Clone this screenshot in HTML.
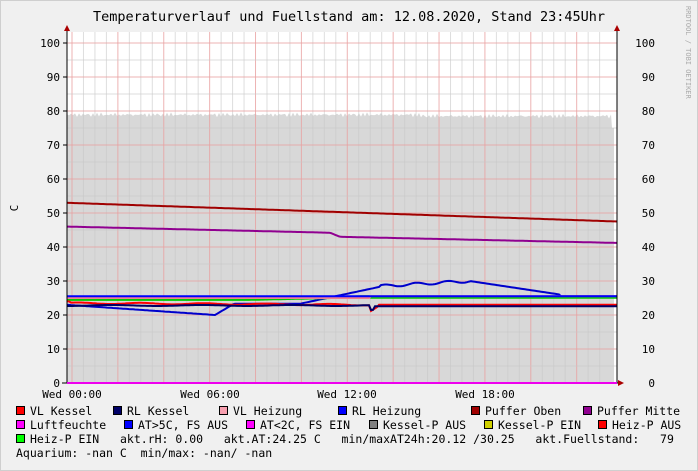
<!DOCTYPE html>
<html><head><meta charset="utf-8"><style>
html,body{margin:0;padding:0;background:#f0f0f0}
svg{display:block}
text{font-family:"DejaVu Sans Mono","Liberation Mono",monospace;font-size:11px;fill:#000;white-space:pre}
.lg{font-size:11.5px}
</style></head><body>
<svg id="s" width="698" height="471" xmlns="http://www.w3.org/2000/svg" xml:space="preserve">
<rect x="0" y="0" width="698" height="471" fill="#f0f0f0"/>
<rect x="0.5" y="0.5" width="697" height="470" fill="none" stroke="#cfcfcf"/>
<rect x="67" y="32" width="550" height="351" fill="#fff"/>
<g id="area"></g>
<g id="grid"></g>
<g id="lines" fill="none" stroke-width="2"></g>
<text x="349" y="21" text-anchor="middle" style="font-size:13.5px">Temperaturverlauf und Fuellstand am: 12.08.2020, Stand 23:45Uhr</text>
<text x="18" y="208" transform="rotate(-90 18 208)" text-anchor="middle">C</text>
<text x="686" y="6" transform="rotate(90 686 6)" style="font-size:7px;fill:#aaa">RRDTOOL / TOBI OETIKER</text>
<g id="lab"></g>
<line x1="67" y1="383" x2="67" y2="30" stroke="#000"/>
<line x1="617" y1="383" x2="617" y2="30" stroke="#000"/>
<line x1="62" y1="383" x2="622" y2="383" stroke="#000"/>
<polygon points="64,31 70,31 67,25" fill="#a00"/>
<polygon points="614,31 620,31 617,25" fill="#a00"/>
<polygon points="618,380 618,386 624,383" fill="#a00"/>
<line x1="67" y1="383" x2="617" y2="383" stroke="#e0e" stroke-width="2"/>
<text x="72" y="398" text-anchor="middle">Wed 00:00</text>
<text x="210" y="398" text-anchor="middle">Wed 06:00</text>
<text x="347" y="398" text-anchor="middle">Wed 12:00</text>
<text x="485" y="398" text-anchor="middle">Wed 18:00</text>
<g id="leg"></g>
<text class="lg" x="120" y="443">akt.rH: 0.00   akt.AT:24.25 C   min/maxAT24h:20.12 /30.25   akt.Fuellstand:   79</text>
<text class="lg" x="16" y="457">Aquarium: -nan C  min/max: -nan/ -nan</text>
</svg>
<script>
const NS="http://www.w3.org/2000/svg",Y=v=>383-v*3.4;
function el(p,t,a,tx){const e=document.createElementNS(NS,t);for(const k in a)e.setAttribute(k,a[k]);if(tx!==undefined)e.textContent=tx;document.getElementById(p).appendChild(e);return e;}
let pts="67,383 ";for(let x=67;x<=612;x+=2){let v=79+Math.sin(x*1.7)*0.4+((x*37)%7)/10-0.4;if(x>420)v-=0.4;pts+=x+","+Y(v).toFixed(1)+" ";}
pts+="612,"+Y(75)+" 614,"+Y(75)+" 614,383";el("area","polygon",{points:pts,fill:"#d8d8d8"});
for(let i=0;i<48;i++){let x=72+i*11.47-11.47;if(x<67||x>617)continue;let maj=((i-1)%4===0);el("grid","line",{x1:x,y1:32,x2:x,y2:383,stroke:maj?"#e8a0a0":"#c8c8c8","stroke-width":1,"stroke-opacity":maj?0.8:0.6});}
for(let v=5;v<=100;v+=5){let maj=v%10==0;el("grid","line",{x1:67,y1:Y(v),x2:617,y2:Y(v),stroke:maj?"#e8a0a0":"#c8c8c8","stroke-opacity":maj?0.8:0.6});}
for(let v=0;v<=100;v+=10){el("lab","text",{x:60,y:Y(v)+4,"text-anchor":"end"},String(v));el("lab","text",{x:655,y:Y(v)+4,"text-anchor":"end"},String(v));el("lab","line",{x1:63,y1:Y(v),x2:67,y2:Y(v),stroke:"#000"});}
function path(c,f,w){let d="";for(let x=67;x<=617;x+=2){d+=(x==67?"M":"L")+x+","+Y(f(x)).toFixed(1);}el("lines","path",{d:d,stroke:c,"stroke-width":w||2});}
path("#00c",x=>x<215?23-(x-67)/148*3:x<235?20+(x-215)/20*3.5:x<300?23.3:x<380?23.3+(x-300)/80*5:x<470?28.5+(x-380)/90*1.5+Math.sin(x*0.2)*0.4:x<560?30-(x-470)/90*4:25.5);
path("#0c0",x=>x<250?24.6:x<370?24.6+(x-250)/120*0.8:25.2,3);
path("#f08090",x=>x<370?25:25.5);
path("#00f",x=>25.5);
path("#f00",x=>x<70?24:x<370?23.5-(x-67)/300*0.5+Math.sin(x*0.1)*0.2:x<378?21+(x-370)/8*1.5:23);
path("#006",x=>x<370?22.8+Math.sin(x*0.07)*0.15:x<375?21.5:22.6);
path("#a00000",x=>53-(x-67)/550*5.5);
path("#900090",x=>x<330?46-(x-67)/263*1.8:x<340?44.2-(x-330)/10*1.2:43-(x-340)/277*1.8);
const L=[[16,411,"#f00","VL Kessel"],[113,411,"#006","RL Kessel"],[219,411,"#f8a0b0","VL Heizung"],[338,411,"#00f","RL Heizung"],[471,411,"#a00000","Puffer Oben"],[583,411,"#900090","Puffer Mitte"],
[16,425,"#f0f","Luftfeuchte"],[124,425,"#00f","AT>5C, FS AUS"],[246,425,"#f0f","AT<2C, FS EIN"],[369,425,"#808080","Kessel-P AUS"],[484,425,"#d0d000","Kessel-P EIN"],[598,425,"#f00","Heiz-P AUS"],[16,439,"#0f0","Heiz-P EIN"]];
for(const [x,y,c,t] of L){el("leg","rect",{x:x+0.5,y:y-4.5,width:8,height:8,fill:c,stroke:"#000"});el("leg","text",{x:x+14,y:y+4,"class":"lg"},t);}
</script>
</body></html>
